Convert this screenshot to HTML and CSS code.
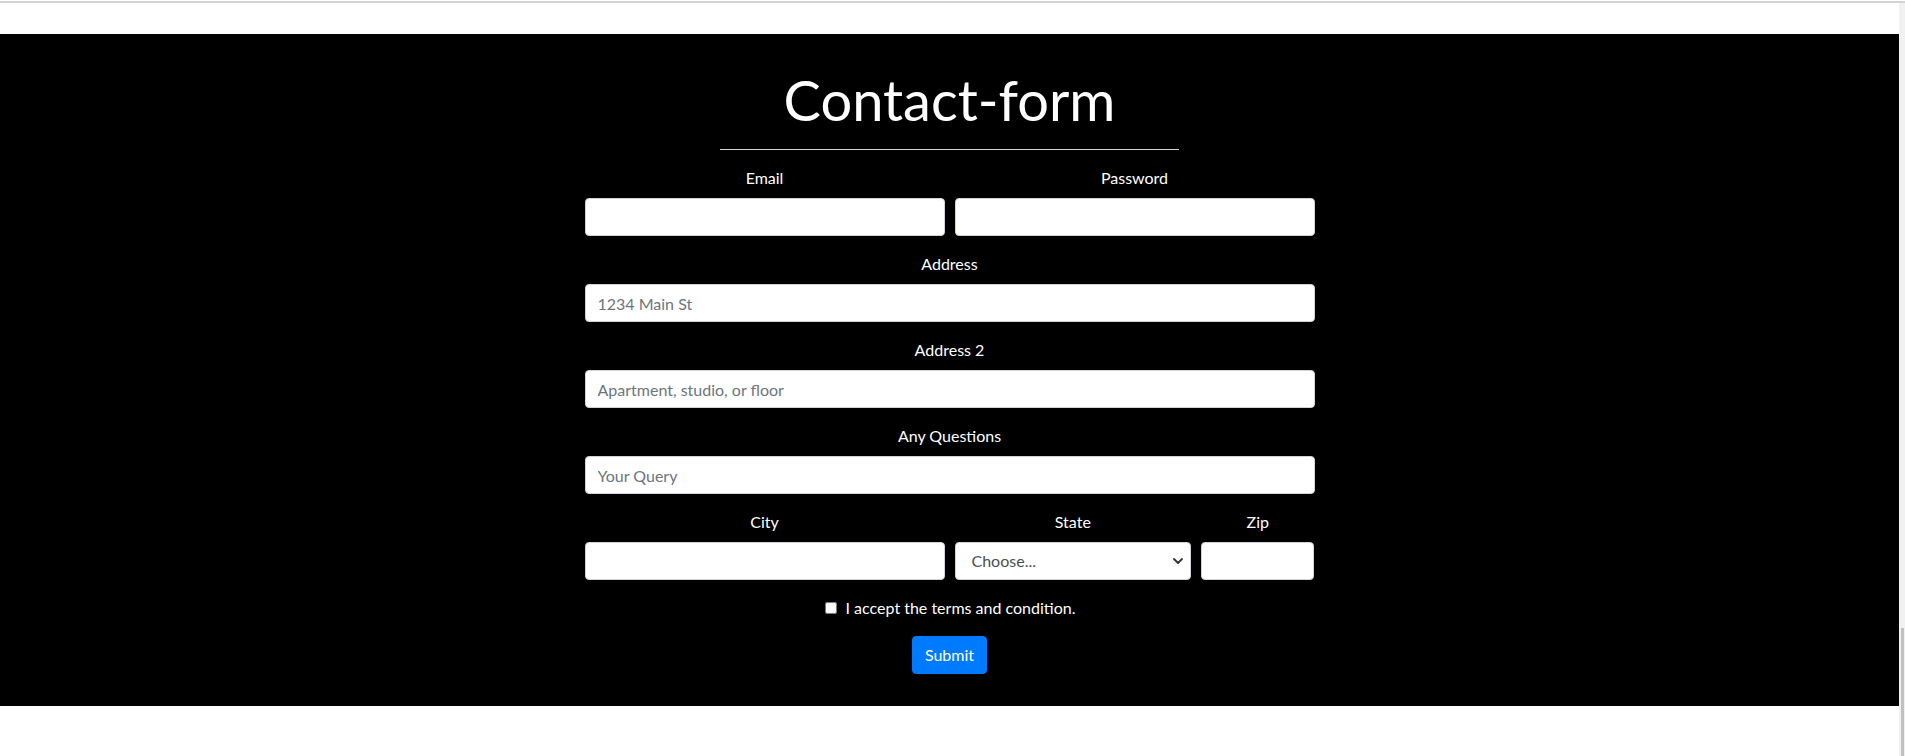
FILE: index.html
```html
<!DOCTYPE html>
<html lang="en">
<head>
<meta charset="utf-8">
<title>Contact-form</title>
<link rel="stylesheet" href="styles.css">
</head>
<body>
<div class="topline"></div>
<div class="page">
  <main class="main">
    <div class="spacer"></div>
    <section class="contact">
      <h1 class="title">Contact-form</h1>
      <hr class="rule">
      <form class="form">
        <div class="row">
          <div class="group col-6">
            <label class="label" for="email">Email</label>
            <input class="control" type="email" id="email">
          </div>
          <div class="group col-6">
            <label class="label" for="password">Password</label>
            <input class="control" type="password" id="password">
          </div>
        </div>
        <div class="group">
          <label class="label" for="address">Address</label>
          <input class="control" type="text" id="address" placeholder="1234 Main St">
        </div>
        <div class="group">
          <label class="label" for="address2">Address 2</label>
          <input class="control" type="text" id="address2" placeholder="Apartment, studio, or floor">
        </div>
        <div class="group">
          <label class="label" for="query">Any Questions</label>
          <input class="control" type="text" id="query" placeholder="Your Query">
        </div>
        <div class="row">
          <div class="group col-6">
            <label class="label" for="city">City</label>
            <input class="control" type="text" id="city">
          </div>
          <div class="group col-4">
            <label class="label" for="state">State</label>
            <div class="select-wrap">
              <select class="control select" id="state">
                <option selected>Choose...</option>
                <option>...</option>
              </select>
              <svg class="chevron" width="10" height="6" viewBox="0 0 10 6" aria-hidden="true">
                <polyline points="1,1 5,5 9,1" fill="none" stroke="#333333" stroke-width="1.8" stroke-linecap="round" stroke-linejoin="round"/>
              </svg>
            </div>
          </div>
          <div class="group col-2">
            <label class="label" for="zip">Zip</label>
            <input class="control" type="text" id="zip">
          </div>
        </div>
        <div class="group check-group">
          <label class="check">
            <input class="checkbox" type="checkbox">
            <span>I accept the terms and condition.</span>
          </label>
        </div>
        <div class="actions">
          <button class="btn" type="submit">Submit</button>
        </div>
      </form>
    </section>
    <div class="bottom"></div>
  </main>
  <div class="scrollbar"><div class="thumb"></div></div>
</div>
</body>
</html>
```
FILE: styles.css
```css
html, body {
  margin: 0;
  padding: 0;
  height: 756px;
  overflow: hidden;
  background: #ffffff;
}

body {
  font-family: Lato, "Open Sans", sans-serif;
  font-size: 16px;
  line-height: 1.5;
}

.topline {
  height: 2px;
  margin-top: 1px;
  background: #d3d3d3;
}

.page {
  display: flex;
  height: 753px;
}

.main {
  flex: 1;
  display: flex;
  flex-direction: column;
}

.spacer {
  height: 31px;
}

.contact {
  background: #000000;
  color: #ffffff;
  padding: 32px 0;
  display: flex;
  flex-direction: column;
  align-items: center;
}

.title {
  margin: 0;
  font-size: 56px;
  font-weight: 400;
  line-height: 1.2;
  text-align: center;
}

.rule {
  width: 459px;
  margin: 16px 0;
  border: 0;
  border-top: 1px solid #d4d4d4;
  height: 0;
}

.form {
  width: 730px;
}

.row {
  display: flex;
  margin: 0 -5px;
}

.row > .group {
  padding: 0 5px;
  box-sizing: border-box;
}

.col-6 { width: 50%; }
.col-4 { width: 33.3333%; }
.col-2 { width: 16.6667%; }

.group {
  margin-bottom: 16px;
}

.label {
  display: block;
  margin-bottom: 8px;
  text-align: center;
  line-height: 24px;
}

.control {
  display: block;
  width: 100%;
  box-sizing: border-box;
  height: 38px;
  padding: 6px 12px;
  font-family: Lato, "Open Sans", sans-serif;
  font-size: 16px;
  line-height: 24px;
  color: #495057;
  background: #ffffff;
  border: 1px solid #ced4da;
  border-radius: 4px;
  margin: 0;
}

.control::placeholder {
  color: #6c757d;
  opacity: 1;
}

.select-wrap {
  position: relative;
}

.select {
  -webkit-appearance: none;
  appearance: none;
  padding-left: 16px;
  padding-right: 28px;
}

.chevron {
  position: absolute;
  right: 8px;
  top: 16px;
  pointer-events: none;
}

.check-group {
  display: flex;
  justify-content: center;
}

.check {
  display: inline-flex;
  align-items: center;
  gap: 9px;
  line-height: 24px;
  padding-left: 1px;
}

.checkbox {
  width: 12px;
  height: 12px;
  margin: 0;
}

.actions {
  display: flex;
  justify-content: center;
}

.btn {
  font-family: Lato, "Open Sans", sans-serif;
  font-size: 16px;
  line-height: 24px;
  padding: 6px 12px;
  color: #ffffff;
  background: #007bff;
  border: 1px solid #007bff;
  border-radius: 4px;
}

.bottom {
  flex: 1;
}

.scrollbar {
  width: 6px;
  background: #f1f1f1;
  display: flex;
  flex-direction: column;
  justify-content: flex-end;
}

.thumb {
  height: 128px;
  margin: 0 1px 0 2px;
  background: #c1c1c1;
}
```
